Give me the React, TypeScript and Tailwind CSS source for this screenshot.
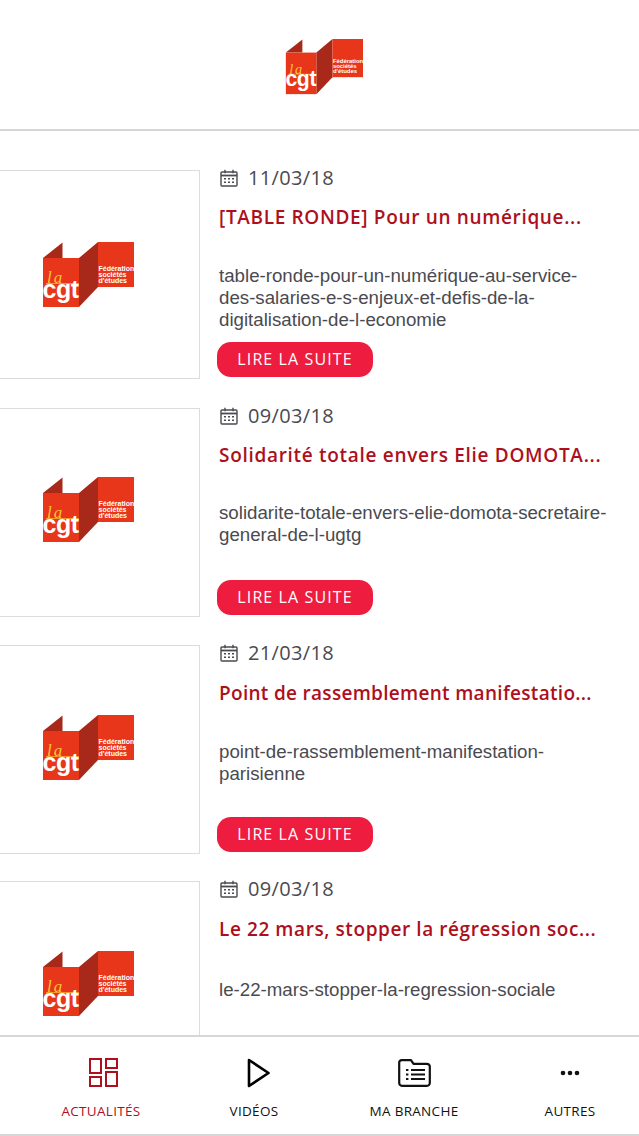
const articles = [
  {
    date: "11/03/18",
    title: "[TABLE RONDE] Pour un numérique...",
    slug: "table-ronde-pour-un-numérique-au-service-des-salaries-e-s-enjeux-et-defis-de-la-digitalisation-de-l-economie",
    cardClass: "mt-[39px]",
    logoClass: "mb-0",
    titleClass: "mt-[18px] tracking-[0.66px]",
    slugClass: "mt-[36px]",
    more: true,
  },
  {
    date: "09/03/18",
    title: "Solidarité totale envers Elie DOMOTA...",
    slug: "solidarite-totale-envers-elie-domota-secretaire-general-de-l-ugtg",
    cardClass: "mt-[29px]",
    logoClass: "mb-[6px]",
    titleClass: "mt-[18px] tracking-[0.7px]",
    slugClass: "mt-[35px]",
    more: true,
  },
  {
    date: "21/03/18",
    title: "Point de rassemblement manifestatio...",
    slug: "point-de-rassemblement-manifestation-parisienne",
    cardClass: "mt-[28px]",
    logoClass: "mb-[4px]",
    titleClass: "mt-[19px] tracking-[0.3px]",
    slugClass: "mt-[36px]",
    more: true,
  },
  {
    date: "09/03/18",
    title: "Le 22 mars, stopper la régression soc...",
    slug: "le-22-mars-stopper-la-regression-sociale",
    cardClass: "mt-[27px]",
    logoClass: "mb-[4px]",
    titleClass: "mt-[19px] tracking-[0.58px]",
    slugClass: "mt-[38px]",
    more: false,
  },
];

function Logo({ className }: { className: string }) {
  return (
    <svg viewBox="0 0 92 66" overflow="visible" className={className}>
      <polygon points="1,16 20.5,0.5 20.5,16" fill="#a8281a" />
      <polygon points="37,16 56,0 56,45 37,65" fill="#a8281a" />
      <rect x="1" y="16" width="36" height="49" fill="#e8361a" />
      <rect x="56" y="0" width="36" height="45" fill="#e8361a" />
      <text x="5" y="41" fontFamily="Liberation Serif, serif" fontStyle="italic" fontSize="17" letterSpacing="2" fill="#f7c531">
        la
      </text>
      <path d="M4 41.5 H37" stroke="#f7c531" strokeWidth="0.7" />
      <text x="0.5" y="56" fontFamily="Liberation Sans, sans-serif" fontWeight="700" fontSize="25" letterSpacing="-0.4" fill="#ffffff">
        cgt
      </text>
      <g fontFamily="Liberation Sans, sans-serif" fontWeight="700" fontSize="7" fill="#ffffff">
        <text x="56.5" y="28.5">Fédération</text>
        <text x="56.5" y="34.5">sociétés</text>
        <text x="56.5" y="40.5">d'études</text>
      </g>
    </svg>
  );
}

function CalendarIcon() {
  return (
    <svg width="18" height="18" viewBox="0 0 18 18" fill="none" stroke="#4a4a50" strokeWidth="1.4" className="ml-px shrink-0">
      <rect x="1" y="3" width="16" height="14" rx="1" />
      <path d="M1 6.5h16" strokeWidth="1.8" />
      <path d="M5 0.8v3.4M13 0.8v3.4" />
      <path
        d="M4 9h2v1.4H4zM8 9h2v1.4H8zM12 9h2v1.4h-2zM4 12.5h2v1.4H4zM8 12.5h2v1.4H8zM12 12.5h2v1.4h-2z"
        fill="#4a4a50"
        stroke="none"
      />
    </svg>
  );
}

function ArticleCard({ article }: { article: (typeof articles)[number] }) {
  return (
    <div className={`flex h-[209px] shrink-0 ${article.cardClass}`}>
      <div className="-ml-px flex h-full w-[201px] shrink-0 items-center justify-center border border-[#dcdce0] bg-white">
        <Logo className={`ml-[-24px] h-[66px] w-[92px] ${article.logoClass}`} />
      </div>
      <div className="flex h-full min-w-0 flex-1 flex-col items-start pl-[19px] pr-[30px]">
        <div className="-mt-px flex h-[18px] items-center gap-[10px]">
          <CalendarIcon />
          <span className="font-['Open_Sans',sans-serif] text-[20px] leading-none tracking-[0.35px] text-[#4a4a50]">
            {article.date}
          </span>
        </div>
        <h2 className={`h-[24px] whitespace-nowrap font-['Open_Sans',sans-serif] text-[19px] font-semibold leading-[24px] text-[#ad0f1c] ${article.titleClass}`}>
          {article.title}
        </h2>
        <p className={`font-['Liberation_Sans',sans-serif] text-[18.7px] leading-[22px] text-[#4a4a50] ${article.slugClass}`}>
          {article.slug}
        </p>
        {article.more && (
          <button className="-ml-[2px] mb-[2px] mt-auto flex h-[35px] w-[156px] shrink-0 items-center justify-center rounded-[14px] bg-[#ee1c3e] pb-[2px] font-['Open_Sans',sans-serif] text-[16px] tracking-[1.1px] text-white">
            LIRE LA SUITE
          </button>
        )}
      </div>
    </div>
  );
}

function NavItem({ label, active, children }: { label: string; active?: boolean; children: React.ReactNode }) {
  return (
    <div className="flex flex-col items-center">
      <div className="flex h-[30px] items-center justify-center">{children}</div>
      <span
        className={`mt-[13px] whitespace-nowrap font-['Open_Sans',sans-serif] text-[13.5px] leading-[20px] tracking-[0.3px] ${
          active ? "text-[#ad0f1c]" : "text-[#111111]"
        }`}
      >
        {label}
      </span>
    </div>
  );
}

export default function App() {
  return (
    <div className="flex h-[1136px] w-[639px] flex-col overflow-hidden bg-white">
      <header className="flex h-[131px] shrink-0 items-center justify-center border-b-2 border-[#d6d6da] pt-[4px]">
        <Logo className="ml-[9px] h-[56px] w-[78px]" />
      </header>

      <main className="flex min-h-0 flex-1 flex-col overflow-hidden">
        {articles.map((article, i) => (
          <ArticleCard key={i} article={article} />
        ))}
      </main>

      <nav className="grid h-[101px] shrink-0 grid-cols-[202px_104px_216px_96px_21px] border-y-2 border-[#d6d6da] pt-[21px]">
        <NavItem label="ACTUALITÉS" active>
          <svg width="30" height="30" viewBox="0 0 30 30" fill="none" stroke="#ad0f1c" strokeWidth="2" className="ml-[6px]">
            <rect x="1" y="1" width="11" height="14" />
            <rect x="17" y="1" width="11" height="9" />
            <rect x="1" y="19" width="11" height="9" />
            <rect x="17" y="14" width="11" height="14" />
          </svg>
        </NavItem>
        <NavItem label="VIDÉOS">
          <svg width="24" height="30" viewBox="0 0 24 30" fill="none" stroke="#000000" strokeWidth="2.6" strokeLinejoin="round" className="ml-[10px]">
            <path d="M2 2 L21.5 15 L2 28 Z" />
          </svg>
        </NavItem>
        <NavItem label="MA BRANCHE">
          <svg width="33" height="28" viewBox="0 0 33 28" fill="none" stroke="#111111" strokeWidth="2.2" strokeLinejoin="round">
            <path d="M1.2 4 A2.5 2.5 0 0 1 3.7 1.2 H13 L15.5 4.8 H29 A2.8 2.8 0 0 1 31.8 7.6 V24 A2.8 2.8 0 0 1 29 26.8 H4 A2.8 2.8 0 0 1 1.2 24 Z" />
            <path d="M13 11h14M13 15.5h14M13 20h14" strokeWidth="1.8" />
            <path d="M8 11h2.4M8 15.5h2.4M8 20h2.4" strokeWidth="1.8" />
          </svg>
        </NavItem>
        <NavItem label="AUTRES">
          <svg width="20" height="6" viewBox="0 0 20 6" fill="#111111">
            <circle cx="3" cy="3" r="2.3" />
            <circle cx="10" cy="3" r="2.3" />
            <circle cx="17" cy="3" r="2.3" />
          </svg>
        </NavItem>
      </nav>
    </div>
  );
}
